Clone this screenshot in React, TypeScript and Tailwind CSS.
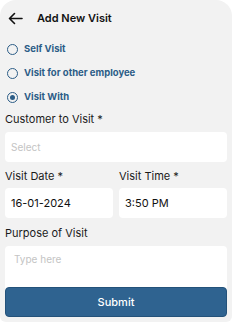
import React from "react";

function Radio({ checked, label }: { checked?: boolean; label: string }) {
  return (
    <div className="flex items-center gap-[6px] h-[24px]">
      <div className="w-[11px] h-[11px] rounded-full border-[1.5px] border-[#2c5d87] flex items-center justify-center">
        {checked && <div className="w-[5px] h-[5px] rounded-full bg-[#2c5d87]" />}
      </div>
      <span className="text-[9.5px] font-bold text-[#2c5d87]">{label}</span>
    </div>
  );
}

export default function App() {
  return (
    <div className="w-[232px] h-[327px] bg-white" style={{ fontFamily: "Inter, 'Noto Sans', sans-serif" }}>
      <div className="w-[232px] h-[322px] bg-[#f2f2f2] rounded-t-[16px] rounded-b-[6px] px-[5px] flex flex-col">
        <div className="flex items-center h-[36px] pl-[3px] gap-[14px]">
          <svg width="15" height="13" viewBox="0 0 15 13" fill="none" stroke="#111" strokeWidth="1.6" strokeLinecap="round" strokeLinejoin="round">
            <path d="M14 6.5H1.5M6.5 1.5L1.5 6.5L6.5 11.5" />
          </svg>
          <span className="text-[11px] font-semibold text-[#111]">Add New Visit</span>
        </div>
        <div className="flex flex-col pl-[2px] mt-[1px]">
          <Radio label="Self Visit" />
          <Radio label="Visit for other employee" />
          <Radio checked label="Visit With" />
        </div>
        <div className="mt-[3px] text-[11px] text-[#1a1a1a] h-[14px] leading-[14px]">Customer to Visit *</div>
        <div className="mt-[6px] h-[30px] bg-white rounded-[4px] flex items-center px-[6px] text-[10px] text-[#c4c4c4]">Select</div>
        <div className="mt-[7px] grid grid-cols-2 gap-[6px]">
          <div className="flex flex-col">
            <div className="text-[11px] text-[#1a1a1a] h-[14px] leading-[14px]">Visit Date *</div>
            <div className="mt-[5px] h-[30px] bg-white rounded-[4px] flex items-center px-[6px] text-[11px] text-[#111]">16-01-2024</div>
          </div>
          <div className="flex flex-col">
            <div className="text-[11px] text-[#1a1a1a] h-[14px] leading-[14px]">Visit Time *</div>
            <div className="mt-[5px] h-[30px] bg-white rounded-[4px] flex items-center px-[6px] text-[11px] text-[#111]">3:50 PM</div>
          </div>
        </div>
        <div className="mt-[8px] text-[11px] text-[#1a1a1a] h-[14px] leading-[14px]">Purpose of Visit</div>
        <div className="mt-[6px] h-[44px] bg-white rounded-t-[4px] px-[9px] pt-[6px] text-[10px] text-[#c4c4c4]">Type here</div>
        <div className="-mt-[3px] h-[30px] bg-[#2f6390] border border-[#24527a] rounded-[4px] flex items-center justify-center text-[11px] font-medium text-white">Submit</div>
      </div>
    </div>
  );
}
